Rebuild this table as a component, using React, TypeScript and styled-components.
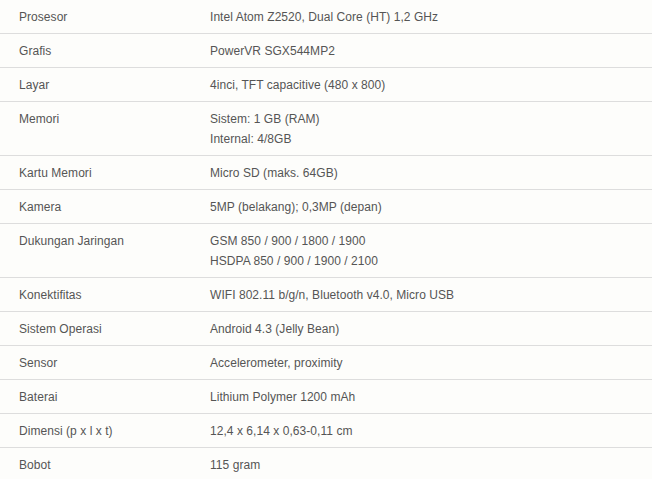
import React from "react";
import styled, { createGlobalStyle } from "styled-components";

const Global = createGlobalStyle`
  html, body { margin: 0; padding: 0; background: #fdfdfb; }
  body { font-family: "Liberation Sans", Arial, sans-serif; }
`;

const Table = styled.div`
  width: 652px;
  display: flex;
  flex-direction: column;
  background: #fdfdfb;
  color: #555555;
  font-size: 12px;
  line-height: 20px;
  letter-spacing: 0.05px;
`;

const Row = styled.div`
  display: grid;
  grid-template-columns: 191px 1fr;
  padding: 7px 0 6px 19px;
  border-bottom: 1px solid #dddddd;
  &:last-child { border-bottom: none; }
`;

const Label = styled.div``;
const Value = styled.div`
  display: flex;
  flex-direction: column;
`;

const specs: [string, string[]][] = [
  ["Prosesor", ["Intel Atom Z2520, Dual Core (HT) 1,2 GHz"]],
  ["Grafis", ["PowerVR SGX544MP2"]],
  ["Layar", ["4inci, TFT capacitive (480 x 800)"]],
  ["Memori", ["Sistem: 1 GB (RAM)", "Internal: 4/8GB"]],
  ["Kartu Memori", ["Micro SD (maks. 64GB)"]],
  ["Kamera", ["5MP (belakang); 0,3MP (depan)"]],
  ["Dukungan Jaringan", ["GSM 850 / 900 / 1800 / 1900", "HSDPA 850 / 900 / 1900 / 2100"]],
  ["Konektifitas", ["WIFI 802.11 b/g/n, Bluetooth v4.0, Micro USB"]],
  ["Sistem Operasi", ["Android 4.3 (Jelly Bean)"]],
  ["Sensor", ["Accelerometer, proximity"]],
  ["Baterai", ["Lithium Polymer 1200 mAh"]],
  ["Dimensi (p x l x t)", ["12,4 x 6,14 x 0,63-0,11 cm"]],
  ["Bobot", ["115 gram"]],
];

export default function App() {
  return (
    <>
      <Global />
      <Table>
        {specs.map(([label, values]) => (
          <Row key={label}>
            <Label>{label}</Label>
            <Value>
              {values.map((v) => (
                <span key={v}>{v}</span>
              ))}
            </Value>
          </Row>
        ))}
      </Table>
    </>
  );
}
